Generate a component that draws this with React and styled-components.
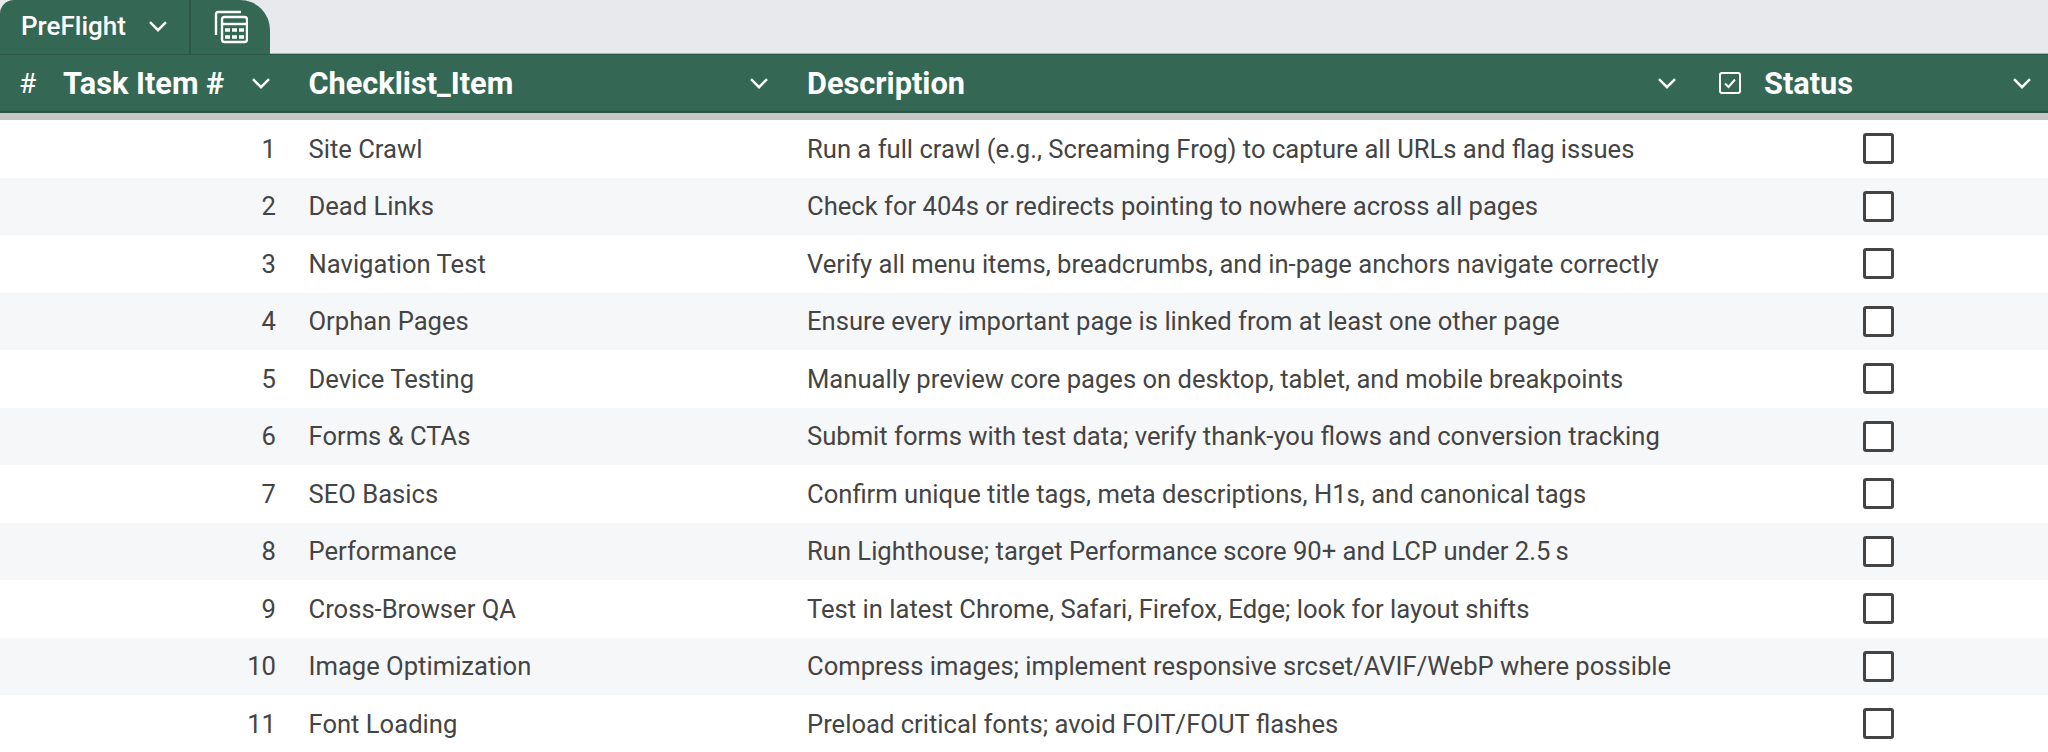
import React from 'react';
import styled, { createGlobalStyle } from 'styled-components';

const Global = createGlobalStyle`
  html, body {
    margin: 0;
    height: 100%;
    overflow: hidden;
    background: #fff;
    font-family: Roboto, "Liberation Sans", sans-serif;
  }
`;

const columns = '287px 498px 908px 355px';
const green = '#356854';

const TabBar = styled.div`
  display: flex;
  height: 53px;
  background: #e8e9ed;
  border-bottom: 1px solid #a9b3ae;
`;

const Tabs = styled.div`
  display: flex;
  width: 270px;
  height: 54px;
  background: ${green};
  border-radius: 14px 30px 0 0;
`;

const SheetTab = styled.div`
  display: flex;
  align-items: center;
  width: 191px;
  box-sizing: border-box;
  padding: 0 22px 2px 21px;
  justify-content: space-between;
  color: #fff;
  font-size: 26px;
  font-weight: 500;
  border-right: 2px solid #2c5746;
`;

const ViewTab = styled.div`
  flex: 1;
  display: flex;
  align-items: center;
  justify-content: center;
  color: #fff;
`;

const HeaderRow = styled.div`
  display: grid;
  grid-template-columns: ${columns};
  height: 56px;
  background: ${green};
  border-top: 1px solid #2c5746;
  border-bottom: 2px solid #2a5544;
  box-shadow: 0 7px 0 #c6c6c6;
  position: relative;
`;

const HeaderCell = styled.div`
  display: flex;
  align-items: center;
  padding: 0 17px 0 ${p => p.$left}px;
  color: #fff;
  font-size: 30.7px;
  font-weight: 700;
  min-width: 0;
`;

const Glyph = styled.span`
  font-weight: 400;
  font-size: 28px;
  width: 44px;
`;

const IconSlot = styled.span`
  display: flex;
  width: 45px;
`;

const Title = styled.span`
  flex: 1;
  white-space: nowrap;
`;

const Body = styled.div`
  padding-top: 7px;
`;

const Row = styled.div`
  display: grid;
  grid-template-columns: ${columns};
  height: 57.5px;
  align-items: center;
  background: ${p => (p.$alt ? '#f6f7f9' : '#fff')};
  color: #444;
  font-size: 25.6px;
`;

const Num = styled.div`
  text-align: right;
  padding-right: 11px;
`;

const Text = styled.div`
  padding-left: ${p => p.$left}px;
  white-space: nowrap;
`;

const Check = styled.div`
  justify-self: center;
  margin-left: 15px;
  width: 31px;
  height: 31px;
  box-sizing: border-box;
  border: 3.5px solid #444;
  border-radius: 3px;
  background: #fff;
`;

const Chevron = () => (
  <svg width="18" height="11" viewBox="0 0 18 11" fill="none" stroke="#fff" strokeWidth="2.4">
    <path d="M1 1.2 L9 9.2 L17 1.2" />
  </svg>
);

const CalcIcon = () => (
  <svg width="34" height="34" viewBox="0 0 34 34" fill="none" stroke="#fff" strokeWidth="2.4">
    <path d="M2 25 V4 Q2 2 4 2 H27" />
    <rect x="8" y="7" width="25" height="25" rx="2.5" />
    <path d="M8 14 H33" />
    <path d="M11 20 h19 M11 27 h19" strokeWidth="3.5" strokeDasharray="5 2" />
  </svg>
);

const CheckIcon = () => (
  <svg width="22" height="22" viewBox="0 0 22 22" fill="none" stroke="#fff" strokeWidth="2">
    <rect x="1" y="1" width="20" height="20" rx="2" />
    <path d="M6 11.5 L9.5 15 L16 7.5" />
  </svg>
);

const items = [
  ['Site Crawl', 'Run a full crawl (e.g., Screaming Frog) to capture all URLs and flag issues'],
  ['Dead Links', 'Check for 404s or redirects pointing to nowhere across all pages'],
  ['Navigation Test', 'Verify all menu items, breadcrumbs, and in-page anchors navigate correctly'],
  ['Orphan Pages', 'Ensure every important page is linked from at least one other page'],
  ['Device Testing', 'Manually preview core pages on desktop, tablet, and mobile breakpoints'],
  ['Forms & CTAs', 'Submit forms with test data; verify thank-you flows and conversion tracking'],
  ['SEO Basics', 'Confirm unique title tags, meta descriptions, H1s, and canonical tags'],
  ['Performance', 'Run Lighthouse; target Performance score 90+ and LCP under 2.5\u2009s'],
  ['Cross-Browser QA', 'Test in latest Chrome, Safari, Firefox, Edge; look for layout shifts'],
  ['Image Optimization', 'Compress images; implement responsive srcset/AVIF/WebP where possible'],
  ['Font Loading', 'Preload critical fonts; avoid FOIT/FOUT flashes'],
];

export default function App() {
  return (
    <>
      <Global />
      <TabBar>
        <Tabs>
          <SheetTab>PreFlight <Chevron /></SheetTab>
          <ViewTab><CalcIcon /></ViewTab>
        </Tabs>
      </TabBar>
      <HeaderRow>
        <HeaderCell $left={19}><Glyph>#</Glyph><Title>Task Item #</Title><Chevron /></HeaderCell>
        <HeaderCell $left={21.5}><Title>Checklist_Item</Title><Chevron /></HeaderCell>
        <HeaderCell $left={22}><Title>Description</Title><Chevron /></HeaderCell>
        <HeaderCell $left={26}><IconSlot><CheckIcon /></IconSlot><Title>Status</Title><Chevron /></HeaderCell>
      </HeaderRow>
      <Body>
        {items.map(([name, desc], i) => (
          <Row key={name} $alt={i % 2 === 1}>
            <Num>{i + 1}</Num>
            <Text $left={21.5}>{name}</Text>
            <Text $left={22}>{desc}</Text>
            <Check />
          </Row>
        ))}
      </Body>
    </>
  );
}
